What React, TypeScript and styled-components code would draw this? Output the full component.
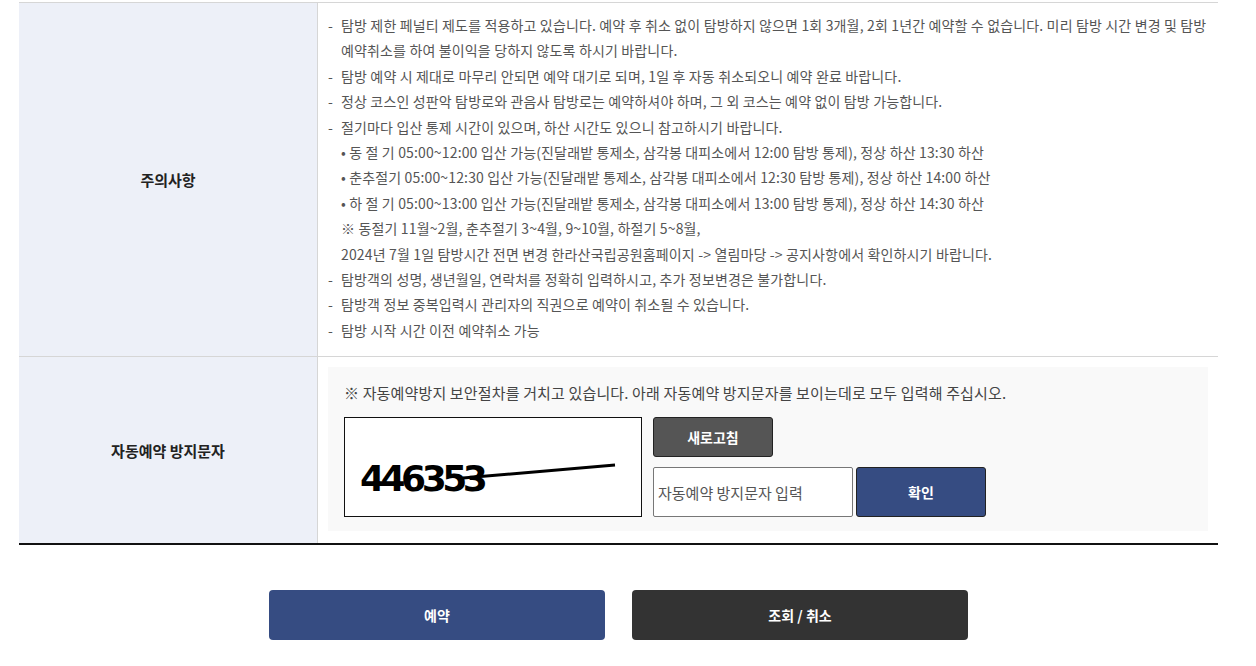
import React from "react";
import styled, {createGlobalStyle} from "styled-components";

const GlobalStyle = createGlobalStyle`
    body {
        margin: 0;
        background: #fff;
        font-family: "Noto Sans CJK KR", "Noto Sans", sans-serif;
        color: #555;
    }
`;

const Page = styled.div`
    width: 1256px;
    padding: 2px 38px 0 19px;
    box-sizing: border-box;
`;

const Table = styled.div`
    display: grid;
    grid-template-columns: 299px 1fr;
    border-top: 1px solid #d6d6d6;
    border-bottom: 2px solid #111;
`;

const Label = styled.div<{ $last?: boolean }>`
    background: #edf0f8;
    border-right: 1px solid #d6d6d6;
    border-bottom: ${p => p.$last ? "none" : "1px solid #d6d6d6"};
    display: flex;
    align-items: center;
    justify-content: center;
    font-size: 15px;
    font-weight: 700;
    color: #222;
`;

const Cell = styled.div<{ $last?: boolean }>`
    border-bottom: ${p => p.$last ? "none" : "1px solid #d6d6d6"};
    padding: ${p => p.$last ? "10px 10px 12px 10px" : "10px 10px 13px 10px"};
`;

const NoticeList = styled.ul`
    list-style: none;
    margin: 0;
    padding: 0;
    font-size: 14px;
    line-height: 25.4px;
    letter-spacing: 0.15px;
    color: #555;
`;

const Item = styled.li`
    position: relative;
    padding-left: 13px;
    &::before {
        content: "-";
        position: absolute;
        left: 0;
    }
`;

const CaptchaBox = styled.div`
    background: #f9f9f9;
    padding: 13px 16px 14px 16px;
`;

const CaptchaNote = styled.p`
    margin: 0 0 12px;
    font-size: 15px;
    line-height: 25px;
    letter-spacing: 0.15px;
    color: #444;
`;

const CaptchaRow = styled.div`
    display: flex;
    gap: 11px;
`;

const CaptchaImage = styled.div`
    width: 298px;
    height: 100px;
    box-sizing: border-box;
    border: 1px solid #111;
    background: #fff;
`;

const Controls = styled.div`
    display: flex;
    flex-direction: column;
    gap: 10px;
`;

const InputRow = styled.div`
    display: flex;
    gap: 3px;
`;

const SmallButton = styled.button<{ $bg: string; $w: number; $h: number }>`
    width: ${p => p.$w}px;
    height: ${p => p.$h}px;
    background: ${p => p.$bg};
    color: #fff;
    border: 1px solid #222;
    border-radius: 3px;
    font-family: inherit;
    font-size: 14px;
    font-weight: 700;
    padding: 0;
`;

const CodeInput = styled.input`
    width: 200px;
    height: 50px;
    box-sizing: border-box;
    border: 1px solid #777;
    border-radius: 2px;
    padding: 0 4px;
    font-family: inherit;
    font-size: 15px;
    color: #555;
    &::placeholder {
        color: #555;
    }
`;

const Footer = styled.div`
    display: flex;
    justify-content: center;
    gap: 27px;
    padding-top: 45px;
`;

const BigButton = styled.button<{ $bg: string }>`
    width: 336px;
    height: 50px;
    border: none;
    border-radius: 4px;
    background: ${p => p.$bg};
    color: #fff;
    font-family: inherit;
    font-size: 14px;
    font-weight: 700;
`;

// 캡차 이미지 (숫자 + 방해선)
const Captcha = () => (
    <svg width="296" height="98" viewBox="0 0 296 98">
        <text x="15" y="73" fontFamily="'DejaVu Sans', sans-serif" fontWeight="bold" fontSize="36"
              letterSpacing="-4.5" fill="#000">446353</text>
        <path d="M118 60 L270 47" stroke="#000" strokeWidth="3" fill="none"/>
    </svg>
);

const App: React.FC = () => {
    return (
        <>
            <GlobalStyle/>
            <Page>
                <Table>
                    <Label>주의사항</Label>
                    <Cell>
                        <NoticeList>
                            <Item>탐방 제한 페널티 제도를 적용하고 있습니다. 예약 후 취소 없이 탐방하지 않으면 1회 3개월, 2회 1년간 예약할 수 없습니다. 미리 탐방 시간 변경 및 탐방 예약취소를 하여 불이익을 당하지 않도록 하시기 바랍니다.</Item>
                            <Item>탐방 예약 시 제대로 마무리 안되면 예약 대기로 되며, 1일 후 자동 취소되오니 예약 완료 바랍니다.</Item>
                            <Item>정상 코스인 성판악 탐방로와 관음사 탐방로는 예약하셔야 하며, 그 외 코스는 예약 없이 탐방 가능합니다.</Item>
                            <Item>절기마다 입산 통제 시간이 있으며, 하산 시간도 있으니 참고하시기 바랍니다.
                                <div>• 동 절 기 05:00~12:00 입산 가능(진달래밭 통제소, 삼각봉 대피소에서 12:00 탐방 통제), 정상 하산 13:30 하산</div>
                                <div>• 춘추절기 05:00~12:30 입산 가능(진달래밭 통제소, 삼각봉 대피소에서 12:30 탐방 통제), 정상 하산 14:00 하산</div>
                                <div>• 하 절 기 05:00~13:00 입산 가능(진달래밭 통제소, 삼각봉 대피소에서 13:00 탐방 통제), 정상 하산 14:30 하산</div>
                                <div>※ 동절기 11월~2월, 춘추절기 3~4월, 9~10월, 하절기 5~8월,</div>
                                <div>2024년 7월 1일 탐방시간 전면 변경 한라산국립공원홈페이지 -&gt; 열림마당 -&gt; 공지사항에서 확인하시기 바랍니다.</div>
                            </Item>
                            <Item>탐방객의 성명, 생년월일, 연락처를 정확히 입력하시고, 추가 정보변경은 불가합니다.</Item>
                            <Item>탐방객 정보 중복입력시 관리자의 직권으로 예약이 취소될 수 있습니다.</Item>
                            <Item>탐방 시작 시간 이전 예약취소 가능</Item>
                        </NoticeList>
                    </Cell>
                    <Label $last>자동예약 방지문자</Label>
                    <Cell $last>
                        <CaptchaBox>
                            <CaptchaNote>※ 자동예약방지 보안절차를 거치고 있습니다. 아래 자동예약 방지문자를 보이는데로 모두 입력해 주십시오.</CaptchaNote>
                            <CaptchaRow>
                                <CaptchaImage><Captcha/></CaptchaImage>
                                <Controls>
                                    <SmallButton $bg="#555" $w={120} $h={40}>새로고침</SmallButton>
                                    <InputRow>
                                        <CodeInput placeholder="자동예약 방지문자 입력"/>
                                        <SmallButton $bg="#364c82" $w={130} $h={50}>확인</SmallButton>
                                    </InputRow>
                                </Controls>
                            </CaptchaRow>
                        </CaptchaBox>
                    </Cell>
                </Table>
                <Footer>
                    <BigButton $bg="#364c82">예약</BigButton>
                    <BigButton $bg="#333">조회 / 취소</BigButton>
                </Footer>
            </Page>
        </>
    );
};

export default App;
